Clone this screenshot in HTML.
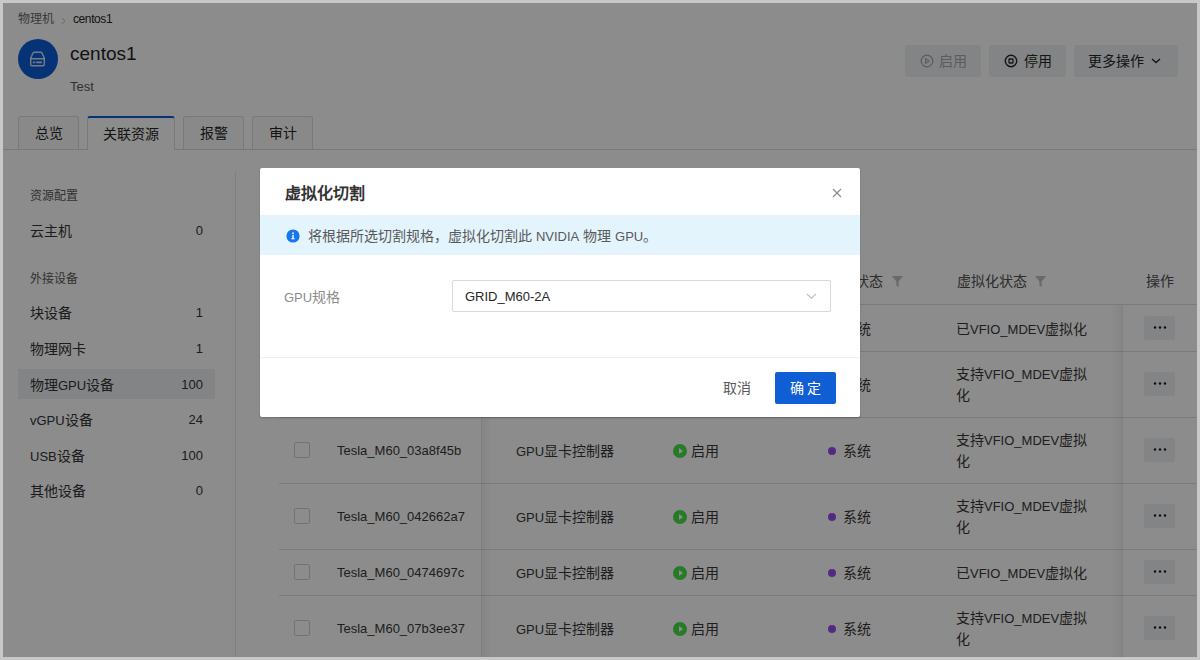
<!DOCTYPE html>
<html lang="zh-CN"><head><meta charset="utf-8"><style>
*{box-sizing:border-box;margin:0;padding:0}
html,body{width:1200px;height:660px;overflow:hidden;background:#fff;font-family:"Liberation Sans",sans-serif;position:relative}
.a{position:absolute;white-space:nowrap}

#mask{position:absolute;left:0;top:0;width:1200px;height:660px;background:rgba(0,0,0,.45)}
.fr{position:absolute;background:#c8c8c8}
.btn{position:absolute;top:45px;height:32px;background:#eff0f2;border-radius:3px;font-size:14px;line-height:32px;color:#262626}
.tab{position:absolute;top:116px;height:33px;border:1px solid #dcdcdc;border-bottom:none;border-radius:3px 3px 0 0;background:#fafafa;font-size:14px;line-height:33px;text-align:center;color:#262626}
.tab.act{background:#fff;border-top:2px solid #0b5bd7;line-height:32px;height:34px}
.side{position:absolute;left:30px;width:173px;font-size:14px;line-height:20px;color:#333}
.side .n{position:absolute;right:0;top:0;font-size:13px}
.sl{position:absolute;left:30px;font-size:12px;line-height:16px;color:#595959}
.hl{position:absolute;left:18px;top:369px;width:197px;height:30px;background:#eff1f4}
.rl{position:absolute;left:279px;width:918px;height:1px;background:#e0e0e0}
.c{position:absolute;font-size:14px;line-height:22px;color:#383838;white-space:nowrap}
.cb{position:absolute;left:294px;width:16px;height:16px;border:1px solid #d0d0d0;border-radius:2px;background:#fff}
.more{position:absolute;left:1144px;width:31px;height:24px;background:#eff0f2;border-radius:2px}
.more i{position:absolute;top:11px;width:3px;height:3px;border-radius:50%;background:#222}
.st{position:absolute;width:14px;height:14px;border-radius:50%;background:#48e048}
.st:after{content:"";position:absolute;left:5.5px;top:4px;border-left:4.5px solid #fff;border-top:3px solid transparent;border-bottom:3px solid transparent}
.pd{position:absolute;width:8px;height:8px;border-radius:50%;background:#9a4cf0}
.l{font-size:13px !important}
.flt{position:absolute;top:276px;width:11px;height:11px}
</style></head><body>
<div class="a" style="left:18px;top:12px;font-size:12px;line-height:14px;color:#6a6a6a">物理机</div>
<svg class="a" style="left:61px;top:17px" width="5" height="8" viewBox="0 0 5 8"><path d="M1 1 L3.8 4 L1 7" fill="none" stroke="#bfbfbf" stroke-width="1"/></svg>
<div class="a" style="left:73px;top:12px;font-size:12px;line-height:14px;color:#262626;letter-spacing:-.4px">centos1</div>
<div class="a" style="left:18px;top:39px;width:40px;height:40px;border-radius:50%;background:#0b5bd7"></div>
<svg class="a" style="left:29px;top:50px" width="17" height="18" viewBox="0 0 17 18"><g fill="none" stroke="#fff" stroke-opacity=".82" stroke-width="1.4" stroke-linecap="round" stroke-linejoin="round"><path d="M5.2 2.2 H11.8 Q12.6 2.2 12.9 2.9 L15.3 8 V14.6 Q15.3 15.8 14.1 15.8 H2.9 Q1.7 15.8 1.7 14.6 V8 L4.1 2.9 Q4.4 2.2 5.2 2.2 Z"/><path d="M1.7 8.8 H15.3"/><path d="M4.5 12.4 H5.5 M7.8 12.4 H12.3" stroke-width="1.6"/></g></svg>
<div class="a" style="left:70px;top:42px;font-size:19px;line-height:24px;color:#1f1f1f">centos1</div>
<div class="a" style="left:70px;top:79px;font-size:13px;line-height:16px;color:#595959">Test</div>
<div class="btn" style="left:905px;width:76px;color:#a8a8a8"><svg class="a" style="left:15px;top:9px" width="14" height="14" viewBox="0 0 14 14"><circle cx="7" cy="7" r="5.8" fill="none" stroke="#a8a8a8" stroke-width="1.2"/><path d="M5.6 4.6 L9 7 L5.6 9.4 Z" fill="none" stroke="#a8a8a8" stroke-width="1.1" stroke-linejoin="round"/></svg><span class="a" style="left:34px;top:0">启用</span></div>
<div class="btn" style="left:989px;width:77px"><svg class="a" style="left:15px;top:9px" width="14" height="14" viewBox="0 0 14 14"><circle cx="7" cy="7" r="5.7" fill="none" stroke="#262626" stroke-width="1.4"/><rect x="5" y="5" width="4" height="4" rx=".6" fill="none" stroke="#262626" stroke-width="1.3"/></svg><span class="a" style="left:35px;top:0">停用</span></div>
<div class="btn" style="left:1074px;width:104px"><span class="a" style="left:14px;top:0">更多操作</span><svg class="a" style="left:77px;top:13px" width="10" height="6" viewBox="0 0 10 6"><path d="M1 1 L5 4.6 L9 1" fill="none" stroke="#262626" stroke-width="1.3"/></svg></div>
<div class="a" style="left:0;top:149px;width:1200px;height:1px;background:#dcdcdc"></div>
<div class="tab" style="left:18px;width:61px">总览</div>
<div class="tab act" style="left:87px;width:88px">关联资源</div>
<div class="tab" style="left:183px;width:61px">报警</div>
<div class="tab" style="left:252px;width:61px">审计</div>
<div class="a" style="left:235px;top:172px;width:1px;height:500px;background:#e8e8e8"></div>
<div class="hl"></div>
<div class="sl" style="top:188px">资源配置</div>
<div class="sl" style="top:271px">外接设备</div>
<div class="side" style="top:220.6px">云主机<span class="n">0</span></div>
<div class="side" style="top:303.0px">块设备<span class="n">1</span></div>
<div class="side" style="top:339.0px">物理网卡<span class="n">1</span></div>
<div class="side" style="top:374.5px">物理<span class=l>GPU</span>设备<span class="n">100</span></div>
<div class="side" style="top:410.0px"><span class=l>vGPU</span>设备<span class="n">24</span></div>
<div class="side" style="top:445.5px"><span class=l>USB</span>设备<span class="n">100</span></div>
<div class="side" style="top:481.0px">其他设备<span class="n">0</span></div>
<div class="rl" style="top:304px"></div>
<div class="c" style="left:294px;top:270px;"></div>
<div class="c" style="left:827px;top:270px;color:#505050">来源状态</div>
<svg class="flt" style="left:892px" viewBox="0 0 11 11"><path d="M0 0 H11 L6.6 5.5 V11 L4.4 9.5 V5.5 Z" fill="#bfbfbf"/></svg>
<div class="c" style="left:957px;top:270px;color:#505050">虚拟化状态</div>
<svg class="flt" style="left:1035px" viewBox="0 0 11 11"><path d="M0 0 H11 L6.6 5.5 V11 L4.4 9.5 V5.5 Z" fill="#bfbfbf"/></svg>
<div class="c" style="left:1146px;top:270px;color:#505050">操作</div>
<div class="rl" style="top:351px"></div>
<div class="cb" style="top:320px"></div>
<div class="c l" style="left:337px;top:318px">Tesla_M60_01b2c3d4</div>
<div class="c" style="left:516px;top:318px"><span class=l>GPU</span>显卡控制器</div>
<div class="st" style="left:673px;top:321.5px"></div>
<div class="c" style="left:691px;top:318px">启用</div>
<div class="pd" style="left:827.5px;top:324.5px"></div>
<div class="c" style="left:843px;top:318px">系统</div>
<div class="c" style="left:956px;top:318px">已<span class=l>VFIO_MDEV</span>虚拟化</div>
<div class="more" style="top:316px"><svg class="a" style="left:0;top:0" width="31" height="24" viewBox="0 0 31 24"><circle cx="11" cy="11.5" r="1.2" fill="#1a1a1a"/><circle cx="16" cy="11.5" r="1.2" fill="#1a1a1a"/><circle cx="21" cy="11.5" r="1.2" fill="#1a1a1a"/></svg></div>
<div class="rl" style="top:417px"></div>
<div class="cb" style="top:376px"></div>
<div class="c l" style="left:337px;top:374px">Tesla_M60_02e5f6a7</div>
<div class="c" style="left:516px;top:374px"><span class=l>GPU</span>显卡控制器</div>
<div class="st" style="left:673px;top:378.0px"></div>
<div class="c" style="left:691px;top:374px">启用</div>
<div class="pd" style="left:827.5px;top:381.0px"></div>
<div class="c" style="left:843px;top:374px">系统</div>
<div class="c" style="left:956px;top:364px;line-height:21px">支持<span class=l>VFIO_MDEV</span>虚拟<br>化</div>
<div class="more" style="top:372px"><svg class="a" style="left:0;top:0" width="31" height="24" viewBox="0 0 31 24"><circle cx="11" cy="11.5" r="1.2" fill="#1a1a1a"/><circle cx="16" cy="11.5" r="1.2" fill="#1a1a1a"/><circle cx="21" cy="11.5" r="1.2" fill="#1a1a1a"/></svg></div>
<div class="rl" style="top:483px"></div>
<div class="cb" style="top:442px"></div>
<div class="c l" style="left:337px;top:440px">Tesla_M60_03a8f45b</div>
<div class="c" style="left:516px;top:440px"><span class=l>GPU</span>显卡控制器</div>
<div class="st" style="left:673px;top:444.0px"></div>
<div class="c" style="left:691px;top:440px">启用</div>
<div class="pd" style="left:827.5px;top:447.0px"></div>
<div class="c" style="left:843px;top:440px">系统</div>
<div class="c" style="left:956px;top:430px;line-height:21px">支持<span class=l>VFIO_MDEV</span>虚拟<br>化</div>
<div class="more" style="top:438px"><svg class="a" style="left:0;top:0" width="31" height="24" viewBox="0 0 31 24"><circle cx="11" cy="11.5" r="1.2" fill="#1a1a1a"/><circle cx="16" cy="11.5" r="1.2" fill="#1a1a1a"/><circle cx="21" cy="11.5" r="1.2" fill="#1a1a1a"/></svg></div>
<div class="rl" style="top:549px"></div>
<div class="cb" style="top:508px"></div>
<div class="c l" style="left:337px;top:506px">Tesla_M60_042662a7</div>
<div class="c" style="left:516px;top:506px"><span class=l>GPU</span>显卡控制器</div>
<div class="st" style="left:673px;top:510.0px"></div>
<div class="c" style="left:691px;top:506px">启用</div>
<div class="pd" style="left:827.5px;top:513.0px"></div>
<div class="c" style="left:843px;top:506px">系统</div>
<div class="c" style="left:956px;top:496px;line-height:21px">支持<span class=l>VFIO_MDEV</span>虚拟<br>化</div>
<div class="more" style="top:504px"><svg class="a" style="left:0;top:0" width="31" height="24" viewBox="0 0 31 24"><circle cx="11" cy="11.5" r="1.2" fill="#1a1a1a"/><circle cx="16" cy="11.5" r="1.2" fill="#1a1a1a"/><circle cx="21" cy="11.5" r="1.2" fill="#1a1a1a"/></svg></div>
<div class="rl" style="top:595px"></div>
<div class="cb" style="top:564px"></div>
<div class="c l" style="left:337px;top:562px">Tesla_M60_0474697c</div>
<div class="c" style="left:516px;top:562px"><span class=l>GPU</span>显卡控制器</div>
<div class="st" style="left:673px;top:566.0px"></div>
<div class="c" style="left:691px;top:562px">启用</div>
<div class="pd" style="left:827.5px;top:569.0px"></div>
<div class="c" style="left:843px;top:562px">系统</div>
<div class="c" style="left:956px;top:562px">已<span class=l>VFIO_MDEV</span>虚拟化</div>
<div class="more" style="top:560px"><svg class="a" style="left:0;top:0" width="31" height="24" viewBox="0 0 31 24"><circle cx="11" cy="11.5" r="1.2" fill="#1a1a1a"/><circle cx="16" cy="11.5" r="1.2" fill="#1a1a1a"/><circle cx="21" cy="11.5" r="1.2" fill="#1a1a1a"/></svg></div>
<div class="rl" style="top:661px"></div>
<div class="cb" style="top:620px"></div>
<div class="c l" style="left:337px;top:618px">Tesla_M60_07b3ee37</div>
<div class="c" style="left:516px;top:618px"><span class=l>GPU</span>显卡控制器</div>
<div class="st" style="left:673px;top:622.0px"></div>
<div class="c" style="left:691px;top:618px">启用</div>
<div class="pd" style="left:827.5px;top:625.0px"></div>
<div class="c" style="left:843px;top:618px">系统</div>
<div class="c" style="left:956px;top:608px;line-height:21px">支持<span class=l>VFIO_MDEV</span>虚拟<br>化</div>
<div class="more" style="top:616px"><svg class="a" style="left:0;top:0" width="31" height="24" viewBox="0 0 31 24"><circle cx="11" cy="11.5" r="1.2" fill="#1a1a1a"/><circle cx="16" cy="11.5" r="1.2" fill="#1a1a1a"/><circle cx="21" cy="11.5" r="1.2" fill="#1a1a1a"/></svg></div>
<div class="a" style="left:481px;top:257px;width:1px;height:410px;background:rgba(0,0,0,.09)"></div>
<div class="a" style="left:482px;top:257px;width:10px;height:410px;background:linear-gradient(to right,rgba(0,0,0,.05),rgba(0,0,0,0))"></div>
<div class="a" style="left:1122px;top:305px;width:1px;height:360px;background:rgba(0,0,0,.08)"></div>
<div class="a" style="left:1112px;top:305px;width:10px;height:360px;background:linear-gradient(to left,rgba(0,0,0,.05),rgba(0,0,0,0))"></div>
<div id="mask"></div>
<div class="a" style="left:260px;top:168px;width:600px;height:249px;background:#fff;border-radius:2px;box-shadow:0 1px 2px rgba(0,0,0,.22)">
<div class="a" style="left:25px;top:15px;font-size:16px;line-height:22px;font-weight:bold;color:#333">虚拟化切割</div>
<svg class="a" style="left:571.5px;top:19.5px" width="10" height="10" viewBox="0 0 10 10"><path d="M1 1 L9 9 M9 1 L1 9" stroke="#8c8c8c" stroke-width="1.2"/></svg>
<div class="a" style="left:0;top:47px;width:600px;height:40px;background:#e3f4fd"></div>
<svg class="a" style="left:25.5px;top:60.5px" width="14" height="14" viewBox="0 0 14 14"><circle cx="7" cy="7" r="6.6" fill="#1677f0"/><circle cx="7" cy="4.2" r=".85" fill="#fff"/><rect x="6.3" y="5.8" width="1.4" height="4" fill="#fff"/><rect x="5.4" y="9.2" width="3.2" height="1.1" fill="#fff"/></svg>
<div class="a" style="left:48px;top:57px;font-size:14px;line-height:22px;color:#595959">将根据所选切割规格，虚拟化切割此 <span class=l>NVIDIA</span> 物理 <span class=l>GPU</span>。</div>
<div class="a" style="left:24px;top:118px;font-size:14px;line-height:22px;color:#8c8c8c"><span class=l>GPU</span>规格</div>
<div class="a" style="left:192px;top:112px;width:379px;height:32px;border:1px solid #d9d9d9;border-radius:2px;background:#fff"></div>
<div class="a l" style="left:205px;top:118px;font-size:14px;line-height:22px;color:#262626"><span class=l>GRID_M60-2A</span></div>
<svg class="a" style="left:546px;top:125px" width="11" height="7" viewBox="0 0 11 7"><path d="M1 1 L5.5 5.2 L10 1" fill="none" stroke="#bfbfbf" stroke-width="1.1"/></svg>
<div class="a" style="left:0;top:189px;width:600px;height:1px;background:#f0f0f0"></div>
<div class="a" style="left:463px;top:209px;font-size:14px;line-height:22px;color:#595959">取消</div>
<div class="a" style="left:515px;top:204px;width:61px;height:32px;background:#0f5ed4;border-radius:2px;color:#fff;font-size:14px;line-height:32px;text-align:center">确 定</div>
</div>
<div class="fr" style="left:0;top:0;width:1200px;height:3px"></div>
<div class="fr" style="left:0;top:657px;width:1200px;height:3px"></div>
<div class="fr" style="left:0;top:0;width:3px;height:660px"></div>
<div class="fr" style="left:1197px;top:0;width:3px;height:660px"></div>
</body></html>
